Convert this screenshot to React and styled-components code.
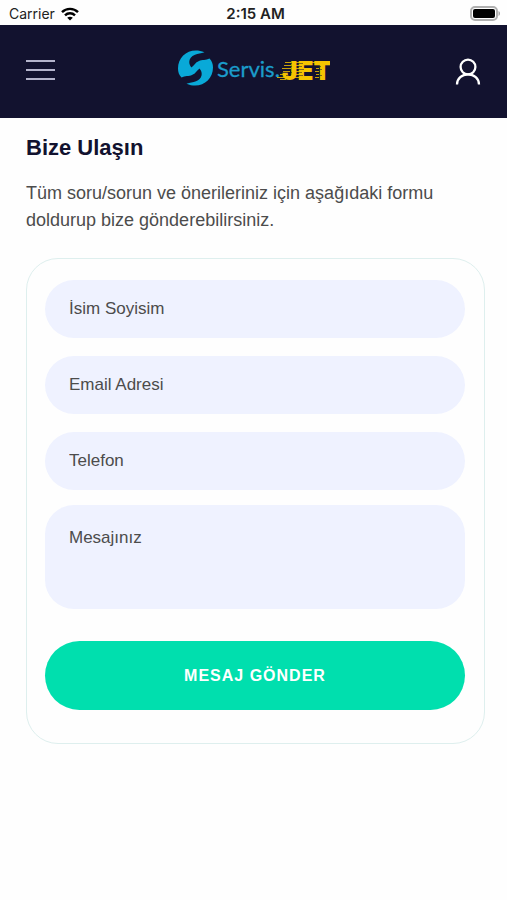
import React, { useState } from 'react';
import styled, { createGlobalStyle } from 'styled-components';

const fields = [
  { name: 'fullName', type: 'text', label: 'İsim Soyisim' },
  { name: 'email', type: 'email', label: 'Email Adresi' },
  { name: 'phone', type: 'tel', label: 'Telefon' },
];

const WifiIcon = () => (
  <svg width="18" height="14" viewBox="0 0 18 14" aria-hidden="true">
    <g fill="none" stroke="#000" strokeWidth="2.4">
      <path d="M1 5.2C5.4 .7 12.6 .7 17 5.2" />
      <path d="M4 8.3C6.8 5.5 11.2 5.5 14 8.3" />
    </g>
    <path d="M9 13.6L6.2 10.8C7.7 9.4 10.3 9.4 11.8 10.8Z" />
  </svg>
);

const BatteryIcon = () => (
  <svg width="32" height="15" viewBox="0 0 32 15" aria-hidden="true">
    <rect x="1" y="1" width="26" height="13" rx="4" fill="#fff" stroke="#b0b0b0" strokeWidth="2" />
    <rect x="3" y="3" width="22" height="9" rx="2" />
    <path d="M28.5 5v5c2-.8 2-4.2 0-5z" fill="#a5a5a5" />
  </svg>
);

const UserIcon = () => (
  <svg width="26" height="30" viewBox="0 0 26 30" fill="none" stroke="#fff" strokeWidth="2.3" aria-hidden="true">
    <circle cx="13" cy="12" r="7.4" />
    <path d="M2 29.5C2 23.5 7 19.4 13 19.4S24 23.5 24 29.5" />
  </svg>
);

const blade = 'M26.5 2.3C13-3.500 0 5 0 18.500C0 22 1 25 3.500 27.500C7 25.500 11 26.500 14 25C18 23.500 18.500 20.500 21.500 18.500L17.500 14.500L13.500 17.500C9.500 13 11 7 17 4.800C20 3.600 23 3.500 26.5 2.3Z';

const LogoMark = () => (
  <svg width="152" height="40" viewBox="0 0 152 40" role="img" aria-label="Servis.JET">
    <g fill="#09a9d8">
      <path d={blade} />
      <path d={blade} transform="rotate(180 17.5 18)" />
    </g>
    <text x="39" y="27" fontFamily="Lato, sans-serif" fontSize="22" fill="#1b9ccb" stroke="#1b9ccb" strokeWidth=".3">Servis.</text>
    <text x="104" y="30" fontFamily="Inter, sans-serif" fontSize="26" fontWeight="900" fill="#f5c400">JET</text>
    {/* speed lines trailing off the left side of each letter */}
    <g stroke="#12122f" strokeWidth="1" opacity=".5">
      <path d="M110 13.5h4M111 16.5h3M109 19.5h4M110 22.5h4M108 25.5h5" />
      <path d="M120 13.500h5M120 16.500h4M120 19.500h6M120 22.500h4M120 25.500h5" />
      <path d="M139 16.500h4M139 19.500h5M139 22.500h3M139 25.500h5M139 28.500h3" />
    </g>
    <g stroke="#f5c400" strokeWidth="1" opacity=".8">
      <path d="M107 12.5h6M106 15.5h7M104 18.5h9M105 21.5h7M102 24.5h6M99 27.5h7M102 29.5h6" />
      <path d="M117 12.5h4M118 15.5h3M116 18.5h5M118 21.5h3M116 24.5h5M117 27.5h4" />
      <path d="M134 12.5h3M138 18.5h3M137 21.5h4M138 24.5h3M137 27.5h4" />
    </g>
  </svg>
);

const App = () => {
  const [values, setValues] = useState({});

  const handleChange = (e) => {
    setValues({ ...values, [e.target.name]: e.target.value });
  };

  const handleSubmit = (e) => {
    e.preventDefault();
  };

  return (
    <Page>
      <GlobalStyle />
      <StatusBar>
        <Carrier>Carrier <WifiIcon /></Carrier>
        <Time>2:15 AM</Time>
        <Battery><BatteryIcon /></Battery>
      </StatusBar>
      <Header>
        <MenuButton type="button" aria-label="Menü">
          <MenuLine />
          <MenuLine />
          <MenuLine />
        </MenuButton>
        <Logo href="#">
          <LogoMark />
        </Logo>
        <UserButton type="button" aria-label="Hesabım">
          <UserIcon />
        </UserButton>
      </Header>
      <Main>
        <Title>Bize Ulaşın</Title>
        <Intro>Tüm soru/sorun ve önerileriniz için aşağıdaki formu doldurup bize gönderebilirsiniz.</Intro>
        <Form onSubmit={handleSubmit}>
          <Fields>
            {fields.map(({ name, type, label }) => (
              <Input
                key={name}
                type={type}
                name={name}
                aria-label={label}
                placeholder={label}
                value={values[name] || ''}
                onChange={handleChange}
              />
            ))}
          </Fields>
          <Message
            name="message"
            aria-label="Mesajınız"
            placeholder="Mesajınız"
            value={values.message || ''}
            onChange={handleChange}
          />
          <SubmitButton type="submit">MESAJ GÖNDER</SubmitButton>
        </Form>
      </Main>
    </Page>
  );
};

export default App;

const GlobalStyle = createGlobalStyle`
  * {
    box-sizing: border-box;
  }

  body {
    margin: 0;
    background: #fefefe;
    font-family: 'Liberation Sans', Arial, sans-serif;
  }
`

const Page = styled.div`
  min-height: 100vh;
  background: #fefefe;
`

const StatusBar = styled.div`
  display: grid;
  grid-template-columns: 1fr auto 1fr;
  align-items: center;
  height: 25px;
  padding: 2px 5px 0 9px;
  font-family: Inter, sans-serif;
  font-size: 14px;
  color: #222;
`

const Carrier = styled.span`
  display: flex;
  align-items: center;
  gap: 6px;
`

const Time = styled.span`
  font-size: 15px;
  font-weight: 600;
`

const Battery = styled.span`
  display: flex;
  justify-content: flex-end;
`

const Header = styled.header`
  display: grid;
  grid-template-columns: 1fr auto 1fr;
  align-items: center;
  height: 93px;
  padding: 0 26px 4px;
  background: #12122f;
`

const MenuButton = styled.button`
  display: flex;
  flex-direction: column;
  gap: 7px;
  width: 29px;
  padding: 0;
  border: 0;
  background: none;
`

const MenuLine = styled.span`
  height: 2px;
  background: #b4b4cc;
`

const Logo = styled.a`
  display: flex;
`

const UserButton = styled.button`
  display: flex;
  justify-self: end;
  padding: 0;
  border: 0;
  background: none;
`

const Main = styled.main`
  padding: 16px 22px 0 26px;
`

const Title = styled.h1`
  margin: 0;
  font-size: 22px;
  line-height: 27px;
  color: #12122f;
`

const Intro = styled.p`
  margin: 19px 0 24px;
  font-size: 18px;
  line-height: 27px;
  color: #4c4c4c;
`

const Form = styled.form`
  display: flex;
  flex-direction: column;
  padding: 21px 19px 33px 18px;
  border: 1px solid #deefee;
  border-radius: 32px;
`

const Fields = styled.div`
  display: flex;
  flex-direction: column;
  gap: 18px;
  margin-bottom: 15px;
`

const Input = styled.input`
  width: 100%;
  height: 58px;
  padding: 0 24px;
  border: 0;
  border-radius: 29px;
  background: #eff2ff;
  font-family: inherit;
  font-size: 17px;
  color: #4c4c4c;

  &::placeholder {
    color: #4c4c4c;
    opacity: 1;
  }
`

const Message = styled(Input).attrs({ as: 'textarea' })`
  height: 104px;
  margin-bottom: 32px;
  padding: 22px 24px;
  line-height: 22px;
  resize: none;
`

const SubmitButton = styled.button`
  height: 69px;
  border: 0;
  border-radius: 35px;
  background: #00dfae;
  font-family: inherit;
  font-size: 16px;
  font-weight: 700;
  letter-spacing: 1px;
  color: #fff;
`
